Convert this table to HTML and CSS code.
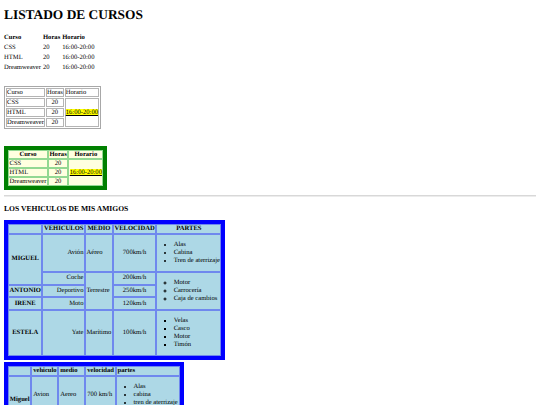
FILE: index.html
```html
<!DOCTYPE html>
<html lang="es">
<head>
<meta charset="utf-8">
<title>Listado de cursos</title>
<link rel="stylesheet" href="styles.css">
</head>
<body>
<h1 class="title">LISTADO DE CURSOS</h1>

<table class="plain">
  <tr><th>Curso</th><th>Horas</th><th>Horario</th></tr>
  <tr><td>CSS</td><td>20</td><td>16:00-20:00</td></tr>
  <tr><td>HTML</td><td>20</td><td>16:00-20:00</td></tr>
  <tr><td>Dreamweaver</td><td>20</td><td>16:00-20:00</td></tr>
</table>

<table class="boxed">
  <tr><td>Curso</td><td>Horas</td><td>Horario</td></tr>
  <tr><td>CSS</td><td class="c">20</td><td rowspan="3"><span class="mark">16:00-20:00</span></td></tr>
  <tr><td>HTML</td><td class="c">20</td></tr>
  <tr><td>Dreamweaver</td><td class="c">20</td></tr>
</table>

<table class="green">
  <tr><th>Curso</th><th>Horas</th><th>Horario</th></tr>
  <tr><td>CSS</td><td class="c">20</td><td rowspan="3"><span class="mark">16:00-20:00</span></td></tr>
  <tr><td>HTML</td><td class="c">20</td></tr>
  <tr><td>Dreamweaver</td><td class="c">20</td></tr>
</table>

<hr class="rule">

<h3 class="subtitle">LOS VEHICULOS DE MIS AMIGOS</h3>

<table class="blue">
  <tr><th></th><th>VEHICULOS</th><th>MEDIO</th><th>VELOCIDAD</th><th>PARTES</th></tr>
  <tr>
    <th rowspan="2">MIGUEL</th>
    <td class="r">Avión</td>
    <td>Aéreo</td>
    <td class="c">700km/h</td>
    <td><ul class="disc"><li>Alas</li><li>Cabina</li><li>Tren de aterrizaje</li></ul></td>
  </tr>
  <tr>
    <td class="r">Coche</td>
    <td rowspan="3">Terrestre</td>
    <td class="c">200km/h</td>
    <td rowspan="3"><ul class="circle"><li>Motor</li><li>Carrocería</li><li>Caja de cambios</li></ul></td>
  </tr>
  <tr><th>ANTONIO</th><td class="r">Deportivo</td><td class="c">250km/h</td></tr>
  <tr><th>IRENE</th><td class="r">Moto</td><td class="c">120km/h</td></tr>
  <tr>
    <th>ESTELA</th>
    <td class="r">Yate</td>
    <td>Marítimo</td>
    <td class="c">100km/h</td>
    <td><ul class="square"><li>Velas</li><li>Casco</li><li>Motor</li><li>Timón</li></ul></td>
  </tr>
</table>

<table class="blue second">
  <tr><th></th><th>vehiculo</th><th>medio</th><th>velocidad</th><th>partes</th></tr>
  <tr>
    <th rowspan="2">Miguel</th>
    <td>Avion</td>
    <td>Aereo</td>
    <td>700 km/h</td>
    <td><ul class="disc"><li>Alas</li><li>cabina</li><li>tren de aterrizaje</li></ul></td>
  </tr>
  <tr><td>Coche</td><td>Terrestre</td><td>200 km/h</td><td>motor</td></tr>
</table>
</body>
</html>
```

FILE: styles.css
```css
* { box-sizing: border-box; }

html, body { background: #fff; }

body {
  margin: 0;
  padding: 0 4px;
  font-family: "Liberation Serif", "Times New Roman", serif;
  font-size: 6.6px;
  line-height: 8px;
  color: #000;
  text-rendering: geometricPrecision;
}

.title {
  font-size: 13.4px;
  line-height: 16px;
  font-weight: bold;
  margin: 7px 0 9px;
}

table {
  font-size: 6.6px;
  border-collapse: separate;
}

th { font-weight: bold; }

.c { text-align: center; }
.r { text-align: right; }

.mark {
  background: #ffff00;
  text-decoration: underline;
}

.plain {
  border-spacing: 1px 2px;
  margin: 0 0 12px -1px;
}
.plain th, .plain td {
  padding: 0 1px 0 0;
  line-height: 8px;
  text-align: left;
}

.boxed {
  border: 1px solid #a8a8a8;
  border-spacing: 1px;
  margin: 0 0 17px 0;
}
.boxed td {
  border: 1px solid #b4b4b4;
  padding: 0;
  line-height: 7px;
}

.green {
  border: 4px solid #008000;
  border-spacing: 0;
  margin: 0;
}
.green th, .green td {
  border: 1px solid #92d892;
  background: #ffffe0;
  padding: 0 0.5px;
  line-height: 7px;
}
.green th { text-align: center; }

.rule {
  margin: 5px 0 0;
  height: 2px;
  border: 0;
  border-top: 1px solid #d8d8d8;
  border-bottom: 1px solid #ececec;
}

.subtitle {
  font-size: 7.6px;
  line-height: 9px;
  font-weight: bold;
  margin: 6.5px 0 7.5px;
}

.blue {
  border: 4px solid #0000ff;
  border-spacing: 0;
  margin: 0 0 2px 0;
}
.blue th, .blue td {
  border: 1px solid #6f88ee;
  background: #add8e6;
  padding: 0 0.5px;
  line-height: 8px;
}
.blue th { text-align: center; }

.blue ul {
  margin: 6px 0;
  padding-left: 16px;
}
.disc { list-style: disc; }
.circle { list-style: circle; }
.square { list-style: square; }

.second th { text-align: left; }
.second th, .second td {
  text-align: left;
  padding: 0 0.8px;
}
```
